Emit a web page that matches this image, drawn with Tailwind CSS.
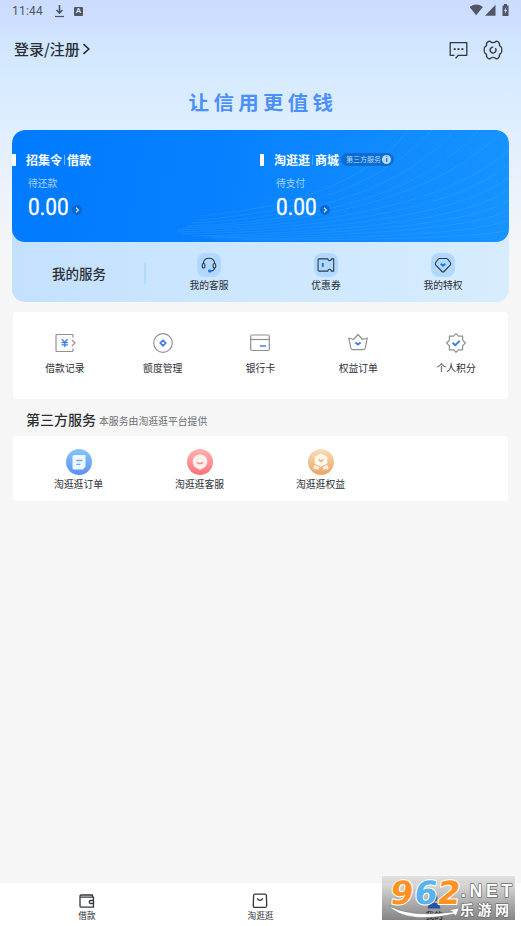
<!DOCTYPE html>
<html lang="zh-CN">
<head>
<meta charset="utf-8">
<meta name="viewport" content="width=device-width, initial-scale=1">
<title>我的</title>
<script src="https://cdn.jsdelivr.net/npm/@tailwindcss/browser@4"></script>
</head>
<body class="w-[521px] h-[926px] overflow-hidden bg-[#f6f6f6] font-['Noto_Sans_CJK_SC',sans-serif] text-[#2b2e33]">
<div class="relative flex h-[926px] w-[521px] flex-col bg-[linear-gradient(180deg,#cbdcff_0px,#cddeff_22px,#d0e5ff_40px,#d6eaff_75px,#dfeeff_125px,#edf3fa_200px,#f6f6f6_260px)]">

  <!-- Status bar -->
  <div class="flex h-[22px] shrink-0 items-center pl-3 pr-[11px] text-[#505763]">
    <span class="w-[35px] font-[Roboto,sans-serif] text-[12px] leading-[22px] tracking-[0.2px]">11:44</span>
    <svg class="ml-[7px]" width="11" height="14" viewBox="0 0 11 14" fill="none" stroke="currentColor"><path d="M5.5 1v8M2.500 6l3 3 3-3" stroke-width="1.600"/><path d="M1 12.500h9" stroke-width="1.200"/></svg>
    <span class="ml-[9px] flex h-[9px] w-[9px] items-center justify-center rounded-[1px] bg-[#505763] font-[Roboto,sans-serif] text-[8px] leading-none font-bold text-[#d4e0fb]">A</span>
    <svg class="ml-auto mt-[-2px]" width="40" height="14" viewBox="0 0 40 14" fill="currentColor"><path d="M-.5 4Q6.200-0.800 12.900 4L6.200 12.300Z"/><path d="M15 12.800H25.500V1.800Z"/><path d="M32.500 2.500h1.500V1h3v1.500H38.500v10.500h-6Z"/><path d="M36.300 4l-2.300 4h1.300l-.5 3 2.300-4h-1.300Z" fill="#d5e2ff"/></svg>
  </div>

  <!-- Header -->
  <header class="flex h-[54px] shrink-0 items-center pl-[14px] pr-[18px]">
    <span class="mt-[-2px] text-[15px] leading-none font-medium">登录/注册</span>
    <svg class="ml-[2px]" width="9" height="12" viewBox="0 0 9 12" fill="none" stroke="#2b2e33" stroke-width="1.600"><path d="M1.500 1.200 6.800 6l-5.300 4.800"/></svg>
    <svg class="ml-auto mt-[2px]" width="19" height="19" viewBox="0 0 19 19" fill="none" stroke="#34383e" stroke-width="1.300"><path d="M5.500 14.300H1.200V1.700h16.600v12.600H9.300L6.500 17.400" stroke-linejoin="round"/><path d="M4.700 7.300h2v1.600h-2zM8.500 7.300h2v1.600h-2zM12.400 7.300h2v1.600h-2z" fill="#34383e" stroke="none"/></svg>
    <svg class="ml-[15px] mt-[2px]" width="20" height="20" viewBox="0 0 20 20" fill="none" stroke="#34383e" stroke-width="1.300" stroke-linejoin="round"><path d="M5 1.700Q6 1 7.200 1.400Q8 2.700 10 2.700T12.800 1.400Q14 1 15 1.700L16.500 3.500Q15.900 6 18 6.800Q18.800 7.300 18.800 10T18 13.200Q15.900 14 16.500 16.500L15 18.300Q14 19 12.800 18.600Q12 17.300 10 17.300T7.200 18.600Q6 19 5 18.300L3.500 16.500Q4.100 14 2 13.200Q1.200 12.700 1.200 10T2 6.800Q4.100 6 3.500 3.500Z"/><path d="M12.300 8.200A2.900 2.900 0 1 1 8 8Q9 7 10.300 7.200"/></svg>
  </header>

  <!-- Slogan -->
  <div class="flex h-[54px] shrink-0 items-center justify-center pb-[3px]">
    <p class="mr-[-5px] origin-center scale-y-[.93] text-[20.500px] leading-[20px] font-bold tracking-[4.300px] text-[#4b8ff9]">让信用更值钱</p>
  </div>

  <!-- Account card -->
  <section class="ml-3 flex h-[172px] w-[497px] shrink-0 flex-col overflow-hidden rounded-[13px] bg-gradient-to-r from-[#c3e1ff] to-[#d7edfe]">
    <div class="relative h-[112px] shrink-0 overflow-hidden rounded-[13px] bg-[linear-gradient(100deg,#007aff_0%,#0780ff_40%,#1694ff_100%)] text-white">
      <svg class="absolute inset-0" width="497" height="112" viewBox="0 0 497 112" fill="none" stroke="#7fc8ff" stroke-opacity=".15" stroke-width="1">
        <path d="M190 86Q340 72 397 0M185 90Q350 78 420 0M180 93Q370 84 443 0M175 96Q390 88 467 0M170 98Q405 91 491 0M165 100Q415 94 497 20M165 102Q425 96 497 34M170 104Q435 98 497 47M180 106Q445 100 497 59M190 107Q450 102 497 70M200 108Q450 105 497 80M215 109Q455 108 497 90M230 110Q460 110 497 100"/>
      </svg>
      <div class="relative grid h-full grid-cols-[248px_1fr]">
        <div class="pt-[22px]">
          <div class="flex h-4 items-center">
            <i class="h-3 w-1 bg-white"></i>
            <span class="ml-[10px] text-[12px] leading-4 font-bold">招集令</span>
            <i class="mx-[2px] h-[10px] w-px bg-white/45"></i>
            <span class="text-[12px] leading-4 font-bold">借款</span>
          </div>
          <p class="mt-[8px] ml-4 text-[9.800px] leading-[14px] text-[#a6d0ff]">待还款</p>
          <div class="mt-[5px] ml-4 flex h-6 items-center">
            <span class="w-[40px] origin-left scale-x-[.85] font-[Roboto,sans-serif] text-[24.500px] leading-6 [-webkit-text-stroke:0.3px_white]">0.00</span>
            <span class="mt-[6px] ml-[4px] flex size-[10px] items-center justify-center rounded-full bg-[#0967cf]"><svg width="6" height="6" viewBox="0 0 6 6" fill="none" stroke="#bfe0ff" stroke-width="1.300"><path d="M2 .7 4.400 3 2 5.300"/></svg></span>
          </div>
        </div>
        <div class="pt-[22px]">
          <div class="flex h-4 items-center">
            <i class="h-3 w-1 bg-white"></i>
            <span class="ml-[10px] text-[12px] leading-4 font-bold">淘逛逛</span>
            <i class="mx-[2px] h-[10px] w-px bg-white/25"></i>
            <span class="text-[12px] leading-4 font-bold">商城</span>
            <span class="mt-[-1px] ml-[2px] flex h-[13px] w-[53px] items-center rounded-full bg-[#0d6cd0] pl-[5px] text-[7px] leading-none whitespace-nowrap text-[#b6dcff]">第三方服务<b class="ml-px flex size-[9px] items-center justify-center rounded-full bg-[#b9dcff] font-[Roboto,sans-serif] text-[8px] leading-none text-[#1269c5]">i</b></span>
          </div>
          <p class="mt-[8px] ml-4 text-[9.800px] leading-[14px] text-[#a6d0ff]">待支付</p>
          <div class="mt-[5px] ml-4 flex h-6 items-center">
            <span class="w-[40px] origin-left scale-x-[.85] font-[Roboto,sans-serif] text-[24.500px] leading-6 [-webkit-text-stroke:0.3px_white]">0.00</span>
            <span class="mt-[6px] ml-[4px] flex size-[10px] items-center justify-center rounded-full bg-[#0967cf]"><svg width="6" height="6" viewBox="0 0 6 6" fill="none" stroke="#bfe0ff" stroke-width="1.300"><path d="M2 .7 4.400 3 2 5.300"/></svg></span>
          </div>
        </div>
      </div>
    </div>
    <div class="grid h-[60px] grid-cols-[132px_2px_126px_108px_126px] text-[9.800px] leading-[14px]">
      <h2 class="pt-[21px] pl-[40px] text-[13.500px] leading-5 font-medium whitespace-nowrap">我的服务</h2>
      <i class="mt-[21px] h-[21px] w-[2px] bg-[#b0daff]"></i>
      <div class="flex flex-col items-center pt-[11px]">
        <span class="flex size-6 items-center justify-center rounded-[8px] bg-[#b2d8ff]"><svg width="18" height="18" viewBox="0 0 18 18" fill="none" stroke="#2b3a4d" stroke-width="1.100"><path d="M3.300 8V7.500Q3.700 2.200 9 2.200t5.700 5.300V8"/><rect x="2.300" y="7.500" width="2.600" height="4.500" rx="1.300"/><rect x="13.100" y="7.500" width="2.600" height="4.500" rx="1.300"/><path d="M14.500 12Q14.200 15 11 15"/><ellipse cx="9.800" cy="15" rx="1.900" ry="1.600" fill="#087bff" stroke="none"/></svg></span>
        <span class="mt-[1px]">我的客服</span>
      </div>
      <div class="flex flex-col items-center pt-[11px]">
        <span class="flex size-6 items-center justify-center rounded-[8px] bg-[#b2d8ff]"><svg width="18" height="18" viewBox="0 0 18 18" fill="none" stroke="#2b3a4d" stroke-width="1.100" stroke-linejoin="round"><path d="M2 2.900h8.800Q11 4.700 12.600 4.700T14.300 2.900H16.700V15.100H14.300Q14.200 13.300 12.600 13.300T10.800 15.100H2Q1.100 15.100 1.100 14.200V3.800Q1.100 2.900 2 2.900Z"/><path d="M5.800 7v4" stroke="#087bff" stroke-width="1.800"/></svg></span>
        <span class="mt-[1px]">优惠券</span>
      </div>
      <div class="flex flex-col items-center pt-[11px]">
        <span class="flex size-6 items-center justify-center rounded-[8px] bg-[#b2d8ff]"><svg width="18" height="18" viewBox="0 0 18 18" fill="none" stroke="#2b3a4d" stroke-width="1.100" stroke-linejoin="round"><path d="M5.500 2.500h7Q13.300 2.500 14 3.400L16.300 6.500Q17.200 8 16.200 9.200L10 15.500Q9 16.500 8 15.500L1.800 9.200Q.8 8 1.700 6.500L4 3.400Q4.700 2.500 5.500 2.500Z"/><path d="M6.700 7.800 9 9.800l2.300-2" stroke="#087bff" stroke-width="1.900"/></svg></span>
        <span class="mt-[1px]">我的特权</span>
      </div>
    </div>
  </section>

  <!-- Tools -->
  <section class="mt-[10px] ml-[13px] grid h-[87px] w-[495px] shrink-0 grid-cols-5 rounded-[4px] bg-white px-[3px] pt-[20px] text-[9.800px] leading-[14px]">
    <div class="flex flex-col items-center">
      <svg width="22" height="22" viewBox="0 0 22 22" fill="none" stroke="#8d9095" stroke-width="1.200"><path d="M19 5.500V3.500Q19 2.500 18 2.500H3Q2 2.500 2 3.500v15q0 1 1 1h15q1 0 1-1v-2M18 8l3 3-3 3"/><path d="M7.800 7.300 10.700 10.300 13.600 7.300M10.700 10v5M7.500 10.700h6.400M7.500 12.800h6.400" stroke="#3f80e8" stroke-width="1.300"/></svg>
      <span class="mt-[7px]">借款记录</span>
    </div>
    <div class="flex flex-col items-center">
      <svg width="22" height="22" viewBox="0 0 22 22" fill="none" stroke="#8d9095" stroke-width="1.200"><circle cx="11" cy="11" r="9.300"/><path d="m11 8.300 2.700 2.700-2.700 2.700-2.700-2.700Z" stroke="#3f80e8" stroke-width="1.700"/></svg>
      <span class="mt-[7px]">额度管理</span>
    </div>
    <div class="flex flex-col items-center">
      <svg width="22" height="22" viewBox="0 0 22 22" fill="none" stroke="#8d9095" stroke-width="1.200"><rect x="1.700" y="3" width="18.600" height="15.500" rx="1.500"/><path d="M1.700 7.500h18.600"/><path d="M11 14h6" stroke="#3f80e8" stroke-width="1.500"/></svg>
      <span class="mt-[7px]">银行卡</span>
    </div>
    <div class="flex flex-col items-center">
      <svg width="22" height="22" viewBox="0 0 22 22" fill="none" stroke="#8d9095" stroke-width="1.200" stroke-linejoin="round"><path d="M1.700 6 6.500 7.500 11 2.500l4.500 5L20.300 6 18.200 16Q17.900 17.700 16.500 17.700h-11Q4.100 17.700 3.800 16Z"/><path d="m8.400 10.400 2.600 2.200 2.600-2.200" stroke="#3f80e8" stroke-width="1.900"/></svg>
      <span class="mt-[7px]">权益订单</span>
    </div>
    <div class="flex flex-col items-center">
      <svg width="22" height="22" viewBox="0 0 22 22" fill="none" stroke="#8d9095" stroke-width="1.200" stroke-linejoin="round"><path d="m11 1.700 2.400 2.500h4.200v3.900L20.300 11l-2.700 2.900v3.900h-4.200L11 20.300l-2.400-2.500H4.400v-3.900L1.700 11l2.700-2.900V4.200h4.200Z"/><path d="m7.500 10.800 2.700 2.400 4.500-4.400" stroke="#3f80e8" stroke-width="1.900"/></svg>
      <span class="mt-[7px]">个人积分</span>
    </div>
  </section>

  <div class="flex h-[37px] shrink-0 items-center pt-[3px] pl-[26px]">
    <h2 class="mt-[-1px] text-[14px] leading-5 font-medium">第三方服务</h2>
    <span class="mt-[3px] ml-[3px] text-[9.850px] leading-4 text-[#6e7073]">本服务由淘逛逛平台提供</span>
  </div>

  <!-- Third-party services -->
  <section class="ml-[13px] grid h-[65px] w-[495px] shrink-0 grid-cols-[121px_121px_121px] rounded-[4px] bg-white pt-[13px] pl-[5px] text-[9.850px] leading-[14px]">
    <div class="flex flex-col items-center">
      <svg width="26" height="26" viewBox="0 0 26 26"><defs><linearGradient id="blueFill" x2="0" y2="1"><stop stop-color="#86c5fc"/><stop offset="1" stop-color="#5b91f4"/></linearGradient></defs><circle cx="13" cy="13" r="13" fill="url(#blueFill)"/><path d="M8 6h11.500v11.500l-2.500 3H8q-1.500 0-1.500-1.500v-11.500Q6.500 6 8 6Z" fill="#eef7ff"/><path d="M10.300 11.500h6M10.300 15.300h4" stroke="#6ba5fb" stroke-width="1.300"/></svg>
      <span class="mt-[2px]">淘逛逛订单</span>
    </div>
    <div class="flex flex-col items-center">
      <svg width="26" height="26" viewBox="0 0 26 26"><defs><linearGradient id="redFill" x2="0" y2="1"><stop stop-color="#feb2b2"/><stop offset="1" stop-color="#fa7477"/></linearGradient></defs><circle cx="13" cy="13" r="13" fill="url(#redFill)"/><path d="M13 5.500c4 0 7.300 3 7.300 7s-2.800 6.700-5.800 7.200L13 21l-1.500-1.300c-3-.5-5.800-3.200-5.800-7.200s3.300-7 7.300-7Z" fill="#fff0ee"/><path d="M9.800 13.300Q13 16.300 16.200 13.300" fill="none" stroke="#f98283" stroke-width="1.400"/></svg>
      <span class="mt-[2px]">淘逛逛客服</span>
    </div>
    <div class="flex flex-col items-center">
      <svg width="26" height="26" viewBox="0 0 26 26"><defs><linearGradient id="goldFill" x2="0" y2="1"><stop stop-color="#fbdcb8"/><stop offset="1" stop-color="#e9a568"/></linearGradient></defs><circle cx="13" cy="13" r="13" fill="url(#goldFill)"/><path d="m13 4.500 6.300 3.200v6.700L13 17.800l-6.300-3.400V7.700Z" fill="#fff8ec"/><path d="m7 15.700 4.500 2.500-1.300 2.800-1.700-1-2.500.5-.7-2ZM19 15.700l-4.500 2.500 1.300 2.800 1.700-1 2.500.5.700-2Z" fill="#fff1dc"/><path d="m10.600 10.300 2.400 2.100 2.400-2.100" fill="none" stroke="#efb882" stroke-width="1.700"/></svg>
      <span class="mt-[2px]">淘逛逛权益</span>
    </div>
  </section>

  <!-- Tab bar -->
  <nav class="mt-auto grid h-[43px] shrink-0 grid-cols-3 bg-white pt-[9px] text-[8.700px] leading-3">
    <div class="flex flex-col items-center">
      <svg width="18" height="18" viewBox="0 0 18 18" fill="none" stroke="#34373b" stroke-width="1.300" stroke-linejoin="round"><path d="M14.500 5V3H3.200Q2 3 2 4.200V14q0 1.200 1.200 1.200h12.300V5.200H2.500"/><path d="M15.500 8.500h-2.800Q11.200 8.500 11.200 10t1.500 1.500h2.800"/></svg>
      <span>借款</span>
    </div>
    <div class="flex flex-col items-center">
      <svg width="18" height="18" viewBox="0 0 18 18" fill="none" stroke="#34373b" stroke-width="1.300"><path d="M4 2.200h10q1.300 0 1.400 1.300l.3 10.300q0 1.500-1.500 1.500H3.800q-1.500 0-1.500-1.500l.3-10.300Q2.700 2.200 4 2.200Z"/><path d="M6.200 6.300Q9 10.500 11.800 6.300"/></svg>
      <span>淘逛逛</span>
    </div>
    <div class="flex flex-col items-center text-[#2f3237]">
      <svg width="18" height="18" viewBox="0 0 18 18" fill="#3c7cff"><circle cx="9" cy="6" r="3.500"/><path d="M2.500 16.500Q3.500 10.500 9 10.500T15.500 16.500Z"/></svg>
      <span>我的</span>
    </div>
  </nav>

  <!-- Site badge overlaying the tab bar -->
  <div class="absolute top-[876px] left-[382px] h-[44px] w-[133px] bg-linear-to-b from-black/8 to-black/48">
    <svg width="133" height="44" viewBox="0 0 133 44">
      <path d="M7 30Q30 42 71 36L67 34l10-2-3 8-2-2Q24 48 7 30Z" fill="#fff" stroke="#777" stroke-width=".5"/>
      <g font-family="DejaVu Sans, sans-serif" font-weight="700" font-size="32" stroke="#fff" stroke-width="2" paint-order="stroke" stroke-linejoin="round" transform="translate(4 0) skewX(-8)">
        <text x="7" y="28" textLength="23" lengthAdjust="spacingAndGlyphs" fill="#ff9221">9</text>
        <text x="31" y="28" textLength="23" lengthAdjust="spacingAndGlyphs" fill="#59b3eb">6</text>
        <text x="54" y="28" textLength="23" lengthAdjust="spacingAndGlyphs" fill="#ff9221">2</text>
      </g>
      <g fill="#fff" stroke="#6d6d6d" stroke-width="1.500" paint-order="stroke" stroke-linejoin="round" font-weight="700">
        <text x="79" y="21" textLength="51" font-family="Liberation Sans, sans-serif" font-size="17.500">.NET</text>
        <text x="78" y="39" textLength="49" font-family="Noto Sans CJK SC, sans-serif" font-size="14">乐游网</text>
      </g>
    </svg>
  </div>
</div>
</body>
</html>
